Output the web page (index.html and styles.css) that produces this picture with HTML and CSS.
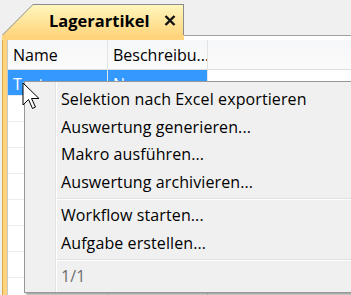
FILE: index.html
```html
<!DOCTYPE html>
<html lang="de">
<head>
  <meta charset="UTF-8" />
  <title>Lagerartikel</title>
  <link rel="stylesheet" href="styles.css">
</head>
<body>
  <div class="tabstrip">
    <div class="tab">
      <div class="tab-inner">
        <span class="tab-title">Lagerartikel</span>
        <svg class="tab-close" width="12" height="11" viewBox="0 0 12 11">
          <path d="M1.5 1 L10.5 10 M10.5 1 L1.5 10" stroke="#111" stroke-width="2.4" fill="none"/>
        </svg>
      </div>
    </div>
  </div>
  <div class="band">
    <div class="band-tab"></div>
    <div class="band-rest"></div>
  </div>
  <div class="frame">
    <div class="grid">
      <div class="row head">
        <div class="cell c1">Name</div>
        <div class="cell c2">Beschreibu...</div>
        <div class="cell c3"></div>
      </div>
      <div class="row selected">
        <div class="cell c1">Test</div>
        <div class="cell c2">Neu</div>
        <div class="cell c3"></div>
      </div>
      <div class="row"><div class="cell c1"></div><div class="cell c2"></div><div class="cell c3"></div></div>
      <div class="row"><div class="cell c1"></div><div class="cell c2"></div><div class="cell c3"></div></div>
      <div class="row"><div class="cell c1"></div><div class="cell c2"></div><div class="cell c3"></div></div>
      <div class="row"><div class="cell c1"></div><div class="cell c2"></div><div class="cell c3"></div></div>
      <div class="row"><div class="cell c1"></div><div class="cell c2"></div><div class="cell c3"></div></div>
      <div class="row"><div class="cell c1"></div><div class="cell c2"></div><div class="cell c3"></div></div>
      <div class="row"><div class="cell c1"></div><div class="cell c2"></div><div class="cell c3"></div></div>
      <div class="row"><div class="cell c1"></div><div class="cell c2"></div><div class="cell c3"></div></div>
    </div>
  </div>

  <div class="menu">
    <div class="menu-item">Selektion nach Excel exportieren</div>
    <div class="menu-item">Auswertung generieren...</div>
    <div class="menu-item">Makro ausführen...</div>
    <div class="menu-item">Auswertung archivieren...</div>
    <div class="menu-sep"></div>
    <div class="menu-item">Workflow starten...</div>
    <div class="menu-item">Aufgabe erstellen...</div>
    <div class="menu-sep"></div>
    <div class="menu-item disabled">1/1</div>
  </div>

  <svg class="cursor" width="20" height="28" viewBox="0 0 20 28">
    <path d="M1 1 L1 23 L6.5 17.5 L10.5 26.5 L13.5 25 L9.5 16.5 L17 16.5 Z" fill="#fff" stroke="#000" stroke-width="1" stroke-linejoin="miter"/>
  </svg>
</body>
</html>
```

FILE: styles.css
```css
body {
  margin: 0;
  background: #f0f0f0;
  font-family: "Open Sans", sans-serif;
  font-size: 16px;
  color: #000;
  overflow: hidden;
  height: 295px;
}
.tabstrip {
  height: 31px;
  padding-top: 4px;
  padding-left: 2px;
}
.tab {
  width: 182px;
  height: 31px;
  padding: 1px 1px 0 1px;
  box-sizing: border-box;
  background: #8c8c8c;
  clip-path: polygon(0 100%, 31px 0, 100% 0, 100% 100%);
}
.tab-inner {
  height: 100%;
  display: flex;
  align-items: center;
  padding-left: 46px;
  background: linear-gradient(#fff6bd, #ffd67f);
  clip-path: polygon(0 100%, 30px 0, 100% 0, 100% 100%);
}
.tab-title {
  font-weight: bold;
  font-size: 16.5px;
}
.tab-close {
  margin-left: 14px;
}
.band {
  display: flex;
  height: 5px;
  padding-left: 2px;
}
.band-tab {
  width: 182px;
  background: #ffd47c;
}
.band-rest {
  flex: 1;
  background: #fff;
  border-top: 1px solid #a0a0a0;
}
.frame {
  margin-left: 2px;
  border-left: 1px solid #d9a948;
  background: #ffd47c;
  padding-left: 4px;
  height: 260px;
}
.grid {
  background: #fff;
  height: 100%;
  border-left: 1px solid #c8c8c8;
}
.row {
  display: flex;
  height: 25px;
  border-bottom: 1px solid #ececec;
}
.cell {
  padding-left: 5px;
  border-right: 1px solid #e4e4e4;
  display: flex;
  align-items: center;
  white-space: nowrap;
  overflow: hidden;
}
.c1 { width: 94px; }
.c2 { width: 94px; }
.c3 { flex: 1; border-right: none; }
.head {
  height: 29px;
  background: linear-gradient(#f6f7f8, #fbfbfb);
  border-bottom: 1px solid #dedede;
}
.selected .c1,
.selected .c2 {
  background: #3399ff;
  color: #fff;
  align-items: flex-start;
  padding-top: 3px;
}
.menu {
  position: absolute;
  left: 24px;
  top: 81px;
  width: 340px;
  height: 212px;
  background: #f0f0f0 linear-gradient(to right, transparent 30px, #e2e3e3 30px, #e2e3e3 31px, #fff 31px, #fff 32px, transparent 32px);
  border: 1px solid #979797;
  box-shadow: 2px 2px 2px rgba(0, 0, 0, 0.35);
  padding-top: 4px;
  box-sizing: border-box;
}
.menu-item {
  height: 27.5px;
  line-height: 27.5px;
  padding-left: 36px;
  letter-spacing: 0.1px;
}
.menu-item.disabled {
  color: #6d6d6d;
}
.menu-sep {
  height: 1px;
  margin: 2px 0 2px 32px;
  background: #e0e0e0;
  border-bottom: 1px solid #fff;
}
.cursor {
  position: absolute;
  left: 22px;
  top: 82px;
}
```
